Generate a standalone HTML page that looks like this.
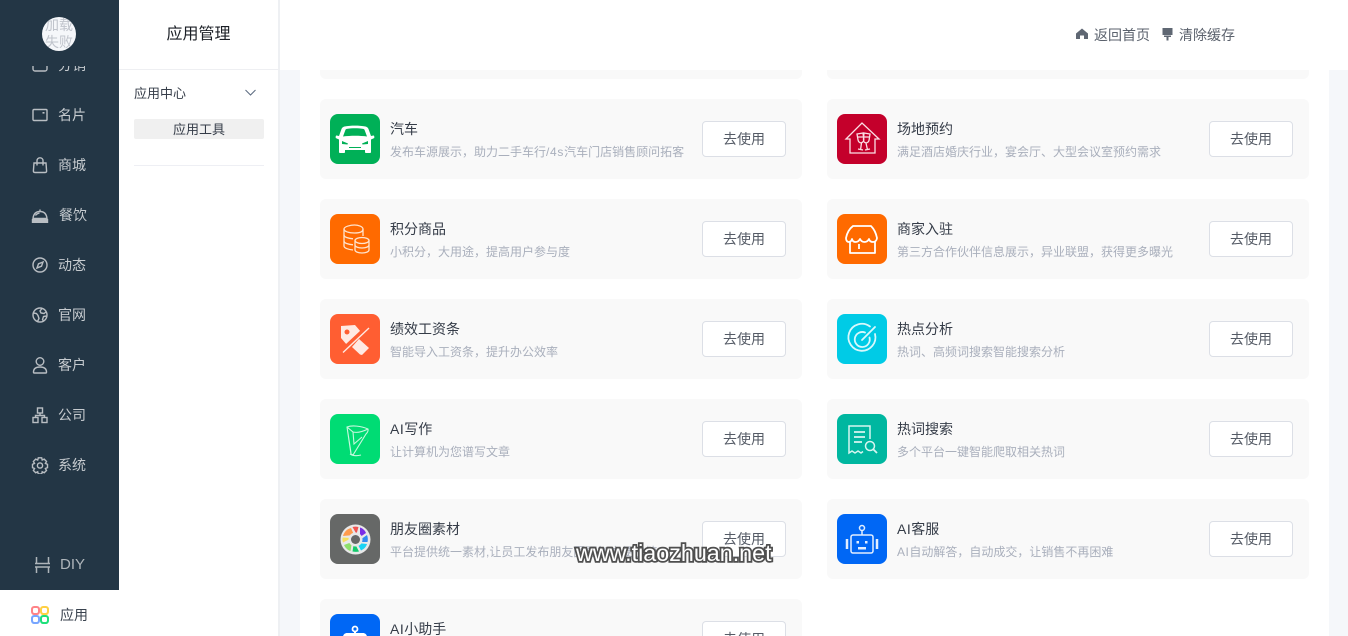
<!DOCTYPE html>
<html lang="zh-CN">
<head>
<meta charset="utf-8">
<title>应用管理</title>
<style>
*{margin:0;padding:0;box-sizing:border-box}
html,body{width:1348px;height:636px;overflow:hidden;background:#f5f7fa;font-family:"Liberation Sans","Noto Sans CJK SC",sans-serif;font-size:14px}
#wrap{position:relative;width:1348px;height:636px;overflow:hidden;background:#f5f7fa}
.abs,.side,.top,.panel,.main,.card,.ic,.t,.d,.b,.it,.it svg,.it span{position:absolute}
.main{left:300px;top:0;width:1029px;height:636px;background:#fff}
.card{width:482px;height:80px;background:#f9f9f9;border-radius:6px;overflow:hidden}
.l{left:320px}.r{left:827px}
.ic{left:10px;top:15px;width:50px;height:50px;border-radius:8px;display:block}
.t{left:70px;top:20px;line-height:20px;color:#353c48;white-space:nowrap}
.d{left:70px;top:43px;line-height:20px;font-size:12px;color:#a9afbc;white-space:nowrap;max-width:296px;overflow:hidden}
.b{left:382px;top:22px;width:84px;height:36px;line-height:34px;text-align:center;border:1px solid #dcdfe6;border-radius:4px;background:#fff;color:#555b66}
.top{left:280px;top:0;width:1068px;height:70px;background:#fff}
.panel{left:119px;top:0;width:161px;height:636px;background:#fff;border-right:2px solid #eef0f3}
.side{left:0;top:0;width:119px;height:590px;background:#233645;overflow:hidden}
.it{left:0;width:119px;height:20px;color:#c6cbcf}
.it span{left:58px;top:0;line-height:20px;white-space:nowrap}
.it svg{left:31px;top:1px;width:18px;height:18px;fill:none;stroke:#b9bec3;stroke-width:1.4}
.ai{letter-spacing:.5px}
.sl{letter-spacing:.7px}
</style>
</head>
<body>
<div id="wrap">
<div class="main"></div>

<div class="card l" style="top:0;height:79px"></div>
<div class="card r" style="top:0;height:79px"></div>

<!-- row 1 -->
<div class="card l" style="top:99px">
<svg class="ic" viewBox="0 0 50 50" style="background:#00b057"><path fill="#fff" d="M9 22l-2.500-.5c-.8-.2-1.300 2.500-.3 2.800L9 25.500V38c0 .8.500 1 1.200 1H14c.8 0 1-.5 1-1v-2h20v2c0 .5.300 1 1 1h3.800c.7 0 1.200-.2 1.200-1V25.500l2.800-1.200c1-.3.500-3-.3-2.800L41 22l-2.500-7c-.6-1.400-1.500-2-3-2.500-6.500-1.200-14.500-1.200-21 0-1.500.5-2.400 1.100-3 2.500z"/><path fill="#00b057" d="M13 22.500l2.400-6.500c.3-.7.800-1 1.500-1.100 5-.8 11.200-.8 16.200 0 .7.100 1.200.4 1.500 1.100l2.400 6.500c-7-1-16.500-1-24 0zM12 27l6 2.500-.5 1-5.500-.5zM38 27l-6 2.500.5 1 5.500-.5zM19 33h12v1H19z"/></svg>
<div class="t">汽车</div><div class="d">发布车源展示，助力二手车行<span class="sl">/4s</span>汽车门店销售顾问拓客</div><div class="b">去使用</div>
</div>
<div class="card r" style="top:99px">
<svg class="ic" viewBox="0 0 50 50" style="background:#c4002b"><g fill="none" stroke="#fbdfe5" stroke-width="1.300"><path d="M9 25L25 9l17 16h-4v14H13V25z"/><path d="M20 20l6-1 .8 6c.3 2-1 3.500-2.500 3.800s-3-1-3.300-3zM27 19l6 1-.9 6c-.3 2-1.900 3.100-3.400 2.800S26.200 27 26.500 25zM24.500 29l-1 7M21 35l5 1M29 29l1.500 7M28 36l5-1M21 23h5.500M27 23h5.500"/></g></svg>
<div class="t">场地预约</div><div class="d">满足酒店婚庆行业，宴会厅、大型会议室预约需求</div><div class="b">去使用</div>
</div>

<!-- row 2 -->
<div class="card l" style="top:199px">
<svg class="ic" viewBox="0 0 50 50" style="background:#ff6a00"><g fill="none" stroke="#ffe3cc" stroke-width="1.300"><path d="M33 22v-7c0-2.500-5-4-8.500-4S14 12.500 14 15v17c0 2 4 3.500 9 4"/><path d="M14 15c0 2.500 5 4 10.500 4S33 17.500 33 15M14 21c0 2 4 3.500 9 3.800M14 27c0 2 4 3.500 9 3.800"/><ellipse cx="32" cy="26.500" rx="7" ry="3"/><path d="M25 26.500V36c0 1.700 3 3 7 3s7-1.300 7-3v-9.500M25 31c0 1.700 3 3 7 3s7-1.300 7-3"/></g></svg>
<div class="t">积分商品</div><div class="d">小积分，大用途，提高用户参与度</div><div class="b">去使用</div>
</div>
<div class="card r" style="top:199px">
<svg class="ic" viewBox="0 0 50 50" style="background:#ff6a00"><g fill="none" stroke="#fff" stroke-width="1.800" stroke-linejoin="round"><path d="M16 12h18c3 3 5 7 6 12-.3 2.500-2 4-4 4s-3.500-1-4-3c-1 2-2.800 3-4.500 3S24 27 23 25c-1 2-2.700 3-4.500 3s-3-1-3.500-3c-.5 2-2 3-3.500 3-1.200 0-2.500-1.500-2.500-4 1-5 3-9 7-12z"/><path d="M13 28v11h25V28M22 30v5"/></g></svg>
<div class="t">商家入驻</div><div class="d">第三方合作伙伴信息展示，异业联盟，获得更多曝光</div><div class="b">去使用</div>
</div>

<!-- row 3 -->
<div class="card l" style="top:299px">
<svg class="ic" viewBox="0 0 50 50" style="background:#ff5e32"><path fill="#ffeae3" d="M11 12l14-1 6 7-14 13-6-7z"/><circle cx="17" cy="18" r="2.500" fill="#ff5e32"/><path fill="#ffeae3" d="M29 25l10 9-7 7-2-.5-8-7.500z"/><path stroke="#ff5e32" stroke-width="3.500" d="M10 38L40 10"/><path stroke="#ffeae3" stroke-width="1.400" d="M13 38.500L39 14"/></svg>
<div class="t">绩效工资条</div><div class="d">智能导入工资条，提升办公效率</div><div class="b">去使用</div>
</div>
<div class="card r" style="top:299px">
<svg class="ic" viewBox="0 0 50 50" style="background:#00cbe6"><g fill="none" stroke="#d8f8fc" stroke-width="1.800" stroke-linecap="round"><path d="M33 12.500A13.500 13.500 0 1 0 38 20"/><path d="M28 18.500a7.500 7.500 0 1 0 4.500 5"/><path d="M25 26L38 13"/></g></svg>
<div class="t">热点分析</div><div class="d">热词、高频词搜索智能搜索分析</div><div class="b">去使用</div>
</div>

<!-- row 4 -->
<div class="card l" style="top:399px">
<svg class="ic" viewBox="0 0 50 50" style="background:#00dc74"><g fill="none" stroke="#c7f8de" stroke-width="1.100"><path d="M17 13c5-2 14-1 21 2 .5 2-.5 3.500-2 5l-13 21-2-1zM17 13l6 5c4 1 9 0 15-3M17 13l4 26M23 18l1 12 8-7"/><path d="M20 40c3 2 7 2 11 1"/></g></svg>
<div class="t"><span class="ai">AI</span>写作</div><div class="d">让计算机为您谱写文章</div><div class="b">去使用</div>
</div>
<div class="card r" style="top:399px">
<svg class="ic" viewBox="0 0 50 50" style="background:#00b7a0"><g fill="none" stroke="#d6f5f0" stroke-width="1.500"><path d="M33 25V12H12v27l3-2 3 2 3-2 3 2 2-1.500"/><path d="M17 18h11M17 23h11M17 28h8" stroke-width="1.700"/><circle cx="33" cy="32" r="4.500"/><path d="M36.500 35.500L40 39" stroke-width="1.800"/></g></svg>
<div class="t">热词搜索</div><div class="d">多个平台一键智能爬取相关热词</div><div class="b">去使用</div>
</div>

<!-- row 5 -->
<div class="card l" style="top:499px">
<svg class="ic" viewBox="0 0 50 50" style="background:#666867"><circle cx="25.500" cy="25.500" r="15" fill="#e8e8e8"/><path fill="#ff9b4d" d="M13 22c1-4 4-7 8-8l3 7z"/><path fill="#ef5350" d="M22.500 13c2-.5 4-.5 6 0l-2 7z"/><path fill="#7a2ee6" d="M30 13.500c3 1 5 3 6 5.500l-6 4z"/><path fill="#2f8cf0" d="M37 21c1 2.500 1 5 .5 7H27z"/><path fill="#19d3f3" d="M37 30c-1 3-3 5-6 6.500L27 29z"/><path fill="#14c96b" d="M29 37.500c-2 .5-4 .5-6.500 0L24 28z"/><path fill="#8ee06a" d="M20.500 37c-3-1-5-3-6.500-6l8-3z"/><path fill="#f6e05e" d="M13 28.500c-.7-2-.7-3.500-.3-5l9 .5z"/><circle cx="25.500" cy="25.500" r="7" fill="#e8e8e8"/><circle cx="25.500" cy="25.500" r="4.500" fill="#666867"/></svg>
<div class="t">朋友圈素材</div><div class="d">平台提供统一素材,让员工发布朋友圈更加方便快捷</div><div class="b">去使用</div>
</div>
<div class="card r" style="top:499px">
<svg class="ic" viewBox="0 0 50 50" style="background:#0067f5"><g fill="none" stroke="#e2eeff" stroke-width="1.500"><circle cx="25" cy="14" r="2.500"/><path d="M25 16.500V21"/><rect x="14" y="21" width="22" height="18" rx="2"/><path d="M10 25v10M40 25v10" stroke-width="2.500"/></g><path fill="#e2eeff" d="M19.500 27h2.500v2.500h-2.500zM28 27h2.500v2.500H28zM21 33h8v2.500h-8z"/></svg>
<div class="t"><span class="ai">AI</span>客服</div><div class="d"><span class="ai">AI</span>自动解答，自动成交，让销售不再困难</div><div class="b">去使用</div>
</div>

<!-- row 6 -->
<div class="card l" style="top:599px;height:37px;border-radius:6px 6px 0 0">
<div class="abs" style="left:0;top:0;width:482px;height:37px;overflow:hidden">
<svg class="ic" viewBox="0 0 50 50" style="background:#0067f5"><circle cx="25" cy="15" r="2.500" fill="none" stroke="#fff" stroke-width="1.800"/><path fill="#fff" d="M24 17h2v2h7c2 0 4 1.500 4 4v3H13v-3c0-2.500 2-4 4-4h7z"/></svg>
<div class="t"><span class="ai">AI</span>小助手</div><div class="b" style="height:15px;border-bottom:0;border-radius:4px 4px 0 0;overflow:hidden">去使用</div>
</div>
</div>

<!-- top bar -->
<div class="top"></div>
<svg class="abs" style="left:1076px;top:28px" width="12" height="12" viewBox="0 0 12 12"><path fill="#5f6773" d="M6 .5L12 5.500V11H8V7.500H4V11H0V5.500z"/></svg>
<div class="abs" style="left:1094px;top:25px;line-height:20px;color:#5b626d">返回首页</div>
<svg class="abs" style="left:1162px;top:28px" width="11" height="13" viewBox="0 0 11 13"><path fill="#5f6773" d="M.5 0h10v7H.5zM2 7.500h7v1.500H6.500v3.500h-2V9H2z"/></svg>
<div class="abs" style="left:1179px;top:25px;line-height:20px;color:#5b626d">清除缓存</div>

<!-- secondary panel -->
<div class="panel"></div>
<div class="abs" style="left:119px;top:69px;width:160px;height:1px;background:#eeeff2"></div>
<div class="abs" style="left:119px;top:25px;width:159px;text-align:center;font-size:16px;line-height:20px;color:#1b1f26">应用管理</div>
<div class="abs" style="left:134px;top:84px;line-height:20px;font-size:13px;color:#353c48">应用中心</div>
<svg class="abs" style="left:245px;top:89px" width="11" height="7" viewBox="0 0 11 7"><path fill="none" stroke="#5c6b80" stroke-width="1" d="M.5 1l5 5 5-5"/></svg>
<div class="abs" style="left:134px;top:119px;width:130px;height:20px;line-height:21px;font-size:13px;background:#f0f0f0;border-radius:2px;text-align:center;color:#353c48">应用工具</div>
<div class="abs" style="left:134px;top:165px;width:130px;height:1px;background:#eeeff4"></div>

<!-- dark sidebar -->
<div class="side">
<div class="it" style="top:55px"><svg viewBox="0 0 18 18"><rect x="2" y="3" width="14" height="12" rx="2"/></svg><span>分销</span></div>
<div class="it" style="top:105px"><svg viewBox="0 0 18 18"><rect x="2" y="3.500" width="14" height="11" rx="1"/><rect x="11.500" y="6" width="2" height="1.600" fill="#b9bec3" stroke="none"/></svg><span>名片</span></div>
<div class="it" style="top:155px"><svg viewBox="0 0 18 18"><path d="M3 7h12l.6 8c0 1-.6 1.500-1.500 1.500H3.900C3 16.500 2.400 16 2.400 15zM6 9.500V4.800C6 3 7.300 1.800 9 1.800s3 1.200 3 3v4.700"/></svg><span>商城</span></div>
<div class="it" style="top:205px"><svg viewBox="0 0 18 18"><path d="M2 12.500C2.500 8 5 5.500 9 5.500s6.500 2.500 7 7zM9 5.500V3.500"/><path d="M4.500 9.500c1-1.500 2.500-2.200 4-2.300"/><path d="M.8 13h16.400v4H.8z" fill="#b9bec3" stroke="none"/></svg><span style="left:59px">餐饮</span></div>
<div class="it" style="top:255px"><svg viewBox="0 0 18 18"><circle cx="9" cy="9" r="7"/><path d="M12 6l-4.500 1.800L6 12l4.500-1.800z"/></svg><span>动态</span></div>
<div class="it" style="top:305px"><svg viewBox="0 0 18 18"><circle cx="9" cy="9" r="7"/><path d="M2.500 7l3 .5 1.500 2 1 3-1.500 3M11 2.500L9 5l1 2 3 .5 2-1.500M15.500 10l-3 .5-1 3 1 1.500"/></svg><span>官网</span></div>
<div class="it" style="top:355px"><svg viewBox="0 0 18 18"><circle cx="9" cy="5.500" r="3.800"/><path d="M2.500 16.200c0-3.500 2.500-5.200 6.500-5.200s6.500 1.700 6.500 5.200c0 .5-.3.800-.8.800H3.300c-.5 0-.8-.3-.8-.8z"/></svg><span>客户</span></div>
<div class="it" style="top:405px"><svg viewBox="0 0 18 18"><rect x="6.500" y="2" width="5" height="5"/><rect x="2" y="11.500" width="5" height="5"/><rect x="11" y="11.500" width="5" height="5"/><path d="M9 7v2.500M4.500 11.500V9.500h9v2"/></svg><span>公司</span></div>
<div class="it" style="top:455px"><svg viewBox="0 0 18 18"><path d="M7.300 1.800h3.400l.5 2.200 2-.9 2.300 2.400-1.100 1.900 2.100.9v3.400l-2.100.8 1.100 2-2.300 2.300-2-1-.5 2.200H7.300l-.6-2.200-2 1-2.300-2.300 1.100-2-2-.8V8.300l2-.9-1.100-1.900 2.300-2.400 2 .9z"/><circle cx="9" cy="9.500" r="2.600"/></svg><span>系统</span></div>
<div class="it" style="top:555px;color:#aeb5ba"><svg viewBox="0 0 15 16" style="left:35px;top:2px;width:15px;height:16px;stroke:#aeb5ba"><path d="M1.500 0v7M13.500 0v7M0 6.500h15M0 10h15M1.500 10v6M13.500 10v6" stroke-width="1.500"/></svg><span style="left:60px;font-size:15px">DIY</span></div>
</div>

<!-- logo area over sidebar -->
<div class="abs" style="left:0;top:0;width:119px;height:66px;background:#233645"></div>
<div class="abs" style="left:42px;top:17px;width:34px;height:34px;border-radius:50%;background:#f5f7fa;overflow:hidden;color:#c0c4cc;text-align:center;line-height:17px;font-size:14px">加载失败</div>

<!-- active bottom item -->
<div class="abs" style="left:0;top:590px;width:119px;height:46px;background:#fff"></div>
<svg class="abs" style="left:31px;top:606px" width="18" height="18" viewBox="0 0 18 18" fill="none" stroke-width="2"><rect x="1" y="1" width="7" height="7" rx="2.200" stroke="#ff8387"/><rect x="10" y="1" width="7" height="7" rx="2.200" stroke="#ffd043"/><rect x="1" y="10" width="7" height="7" rx="2.200" stroke="#78a6ff"/><rect x="10" y="10" width="7" height="7" rx="2.200" stroke="#1fe07a"/></svg>
<div class="abs" style="left:60px;top:605px;line-height:20px;color:#39424e">应用</div>

<!-- watermark -->
<div class="abs" style="left:576px;top:540px;font-size:23.300px;line-height:27px;color:#fff;-webkit-text-stroke:3.500px #4f4f4f;paint-order:stroke fill;white-space:nowrap">www.tiaozhuan.net</div>
</div>
</body>
</html>
